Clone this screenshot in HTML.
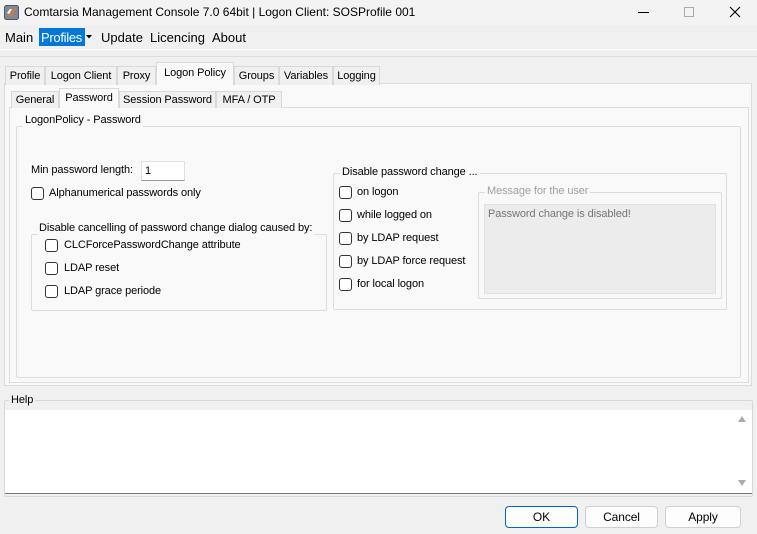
<!DOCTYPE html>
<html><head><style>
*{box-sizing:border-box;margin:0;padding:0}
body{width:757px;height:534px;background:#f0f0f0;font-family:"Liberation Sans",sans-serif;font-size:11px;letter-spacing:-0.1px;color:#000;position:relative;overflow:hidden}
.a{position:absolute;white-space:nowrap}
.cb{position:absolute;width:13px;height:13px;border:1px solid #333;border-radius:3px;background:#fff}
.gb{position:absolute;border:1px solid #dcdcdc;border-radius:2px}
.lg{position:absolute;background:#f9f9f9;padding:0 2px;line-height:13px;white-space:nowrap}
.tab{position:absolute;border:1px solid #d9d9d9;border-bottom:none;background:#f0f0f0;text-align:center;line-height:18px;white-space:nowrap}
.btn{position:absolute;height:22px;border:1px solid #d0d0d0;border-radius:4px;background:#fdfdfd;text-align:center;line-height:20px;font-size:12px}
</style></head><body>
<div class="a" style="left:0;top:0;width:757px;height:25px;background:#f3f3f3"></div>
<svg class="a" style="left:4px;top:5px" width="15" height="15"><rect x="0.5" y="0.5" width="14" height="14" rx="2" fill="#7a8a9a" stroke="#556"/><path d="M4 12 L10 3 L12 3 L7 12Z" fill="#f07020"/><path d="M3 8 L6 4 L8 4 L5 9Z" fill="#fff"/></svg>
<div class="a" style="left:24px;top:5px;font-size:12px;letter-spacing:0">Comtarsia Management Console 7.0 64bit | Logon Client: SOSProfile 001</div>
<div class="a" style="left:638px;top:12px;width:11px;height:1px;background:#000"></div>
<div class="a" style="left:684px;top:7px;width:10px;height:10px;border:1px solid #aaa"></div>
<svg class="a" style="left:729px;top:6px" width="12" height="12"><path d="M1 1L11 11M11 1L1 11" stroke="#000" stroke-width="1.1"/></svg>
<div class="a" style="left:0;top:49px;width:757px;height:1px;background:#fff"></div>
<div class="a" style="left:0;top:56px;width:757px;height:1px;background:#dcdcdc"></div>
<div class="a" style="left:5px;top:30px;font-size:13px;letter-spacing:0">Main</div>
<div class="a" style="left:39px;top:28px;width:46px;height:18px;background:#0078d7"></div>
<div class="a" style="left:41px;top:30px;font-size:13px;letter-spacing:-0.3px;color:#fff">Profiles</div>
<svg class="a" style="left:86px;top:35px" width="7" height="5"><path d="M0 0H6L3 3.5Z" fill="#000"/></svg>
<div class="a" style="left:101px;top:30px;font-size:13px;letter-spacing:0">Update</div>
<div class="a" style="left:150px;top:30px;font-size:13px;letter-spacing:0">Licencing</div>
<div class="a" style="left:212px;top:30px;font-size:13px;letter-spacing:0">About</div>

<div class="a" style="left:4px;top:83px;width:748px;height:303px;background:#f9f9f9;border:1px solid #dcdcdc"></div>
<div class="tab" style="left:5px;top:66px;width:40px">Profile</div>
<div class="tab" style="left:45px;top:66px;width:72px">Logon Client</div>
<div class="tab" style="left:117px;top:66px;width:39px">Proxy</div>
<div class="tab" style="left:156px;top:62px;width:78px;height:23px;background:#f9f9f9;line-height:21px">Logon Policy</div>
<div class="tab" style="left:234px;top:66px;width:45px">Groups</div>
<div class="tab" style="left:279px;top:66px;width:54px">Variables</div>
<div class="tab" style="left:333px;top:66px;width:47px">Logging</div>

<div class="a" style="left:9px;top:107px;width:740px;height:276px;background:#f9f9f9;border:1px solid #dcdcdc"></div>
<div class="tab" style="left:11px;top:91px;width:48px;height:17px;line-height:17px">General</div>
<div class="tab" style="left:59px;top:88px;width:60px;height:20px;background:#f9f9f9;line-height:19px">Password</div>
<div class="tab" style="left:119px;top:91px;width:97px;height:17px;line-height:17px">Session Password</div>
<div class="tab" style="left:216px;top:91px;width:66px;height:17px;line-height:17px">MFA / OTP</div>

<div class="gb" style="left:16px;top:126px;width:725px;height:252px"></div>
<div class="lg" style="left:23px;top:114px">LogonPolicy - Password</div>

<div class="a" style="left:31px;top:164px">Min password length:</div>
<div class="a" style="left:141px;top:161px;width:44px;height:20px;background:#fff;border:1px solid #e0e0e0;border-bottom:1px solid #999;padding:3px 3px">1</div>
<div class="cb" style="left:31px;top:187px"></div>
<div class="a" style="left:49px;top:187px">Alphanumerical passwords only</div>

<div class="gb" style="left:31px;top:234px;width:296px;height:77px"></div>
<div class="lg" style="left:37px;top:222px">Disable cancelling of password change dialog caused by:</div>
<div class="cb" style="left:45px;top:239px"></div><div class="a" style="left:64px;top:239px">CLCForcePasswordChange attribute</div>
<div class="cb" style="left:45px;top:262px"></div><div class="a" style="left:64px;top:262px">LDAP reset</div>
<div class="cb" style="left:45px;top:285px"></div><div class="a" style="left:64px;top:285px">LDAP grace periode</div>

<div class="gb" style="left:333px;top:173px;width:394px;height:137px"></div>
<div class="lg" style="left:340px;top:166px">Disable password change ...</div>
<div class="cb" style="left:339px;top:186px"></div><div class="a" style="left:357px;top:186px">on logon</div>
<div class="cb" style="left:339px;top:209px"></div><div class="a" style="left:357px;top:209px">while logged on</div>
<div class="cb" style="left:339px;top:232px"></div><div class="a" style="left:357px;top:232px">by LDAP request</div>
<div class="cb" style="left:339px;top:255px"></div><div class="a" style="left:357px;top:255px">by LDAP force request</div>
<div class="cb" style="left:339px;top:278px"></div><div class="a" style="left:357px;top:278px">for local logon</div>

<div class="gb" style="left:478px;top:192px;width:244px;height:107px"></div>
<div class="lg" style="left:485px;top:185px;color:#a0a0a0">Message for the user</div>
<div class="a" style="left:484px;top:204px;width:232px;height:90px;background:#ececec;border:1px solid #e2e2e2;color:#777;padding:3px 3px">Password change is disabled!</div>

<div class="gb" style="left:4px;top:400px;width:749px;height:97px;border-color:#d8d8d8"></div>
<div class="lg" style="left:9px;top:394px;background:#f0f0f0">Help</div>
<div class="a" style="left:5px;top:410px;width:747px;height:84px;background:#fff;border-bottom:1px solid #777"></div>
<svg class="a" style="left:737px;top:415px" width="10" height="8"><path d="M1 7H9L5 1Z" fill="#aaa"/></svg>
<svg class="a" style="left:737px;top:479px" width="10" height="8"><path d="M1 1H9L5 7Z" fill="#aaa"/></svg>

<div class="btn" style="left:505px;top:506px;width:73px;border-color:#0067c0">OK</div>
<div class="btn" style="left:585px;top:506px;width:73px">Cancel</div>
<div class="btn" style="left:665px;top:506px;width:76px">Apply</div>
</body></html>
